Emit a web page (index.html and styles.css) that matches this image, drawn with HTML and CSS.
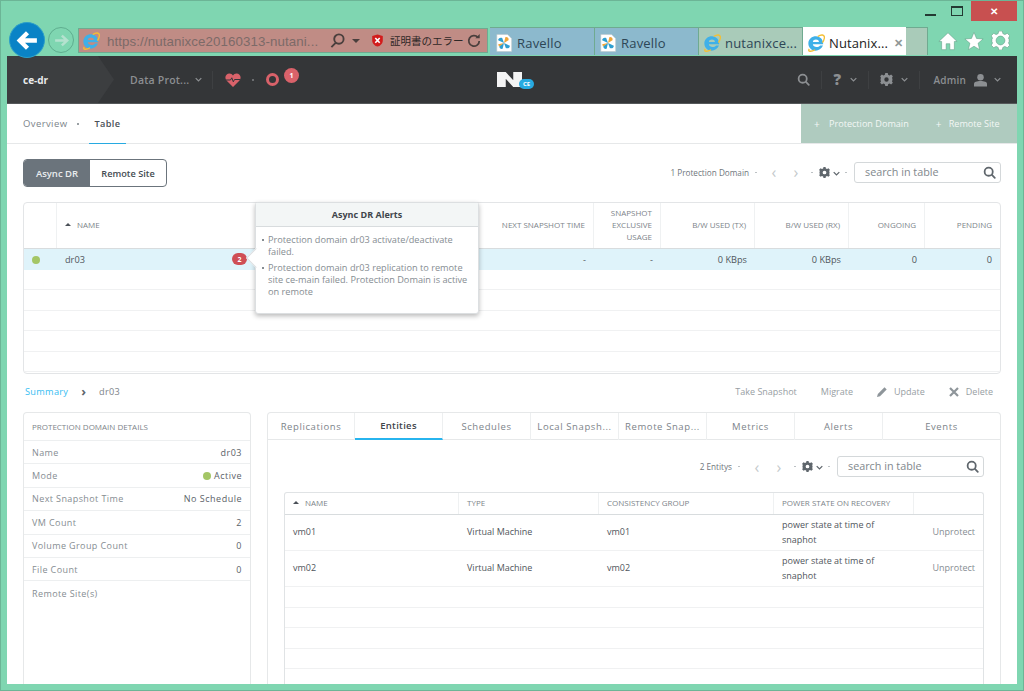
FILE: index.html
```html
<!DOCTYPE html>
<html lang="en">
<head>
<meta charset="utf-8">
<title>Nutanix</title>
<link rel="stylesheet" href="styles.css">
</head>
<body>
<svg class="defs" width="0" height="0" aria-hidden="true">
  <defs>
    <symbol id="ie" viewBox="0 0 20 20">
      <path d="M1.500 10.500C1.500 5.500 5.500 2.500 10 2.500C15 2.500 18 6.500 18 11.500H6.500C6.800 15 12.500 15.500 14.500 12.800H17.800C16 16.500 13 18.500 9.500 18.500C5 18.500 1.500 15 1.500 10.500ZM6.500 8.800H13.300C13 5.300 7 5.300 6.500 8.800Z" fill="#3fb0e8"/>
      <path d="M2.500 16.500C.3 20 5 19.800 9 17.500M12 2.800C15.500 .3 19.800 .2 19.300 4.500C19 6 18.300 8 17.200 9.500" fill="none" stroke="#f4bf33" stroke-width="1.500"/>
    </symbol>
    <symbol id="ravello" viewBox="0 0 20 20">
      <path d="M2 .5H14L18.500 5V19.500H2Z" fill="#fff" stroke="#b9c4c8" stroke-width=".6"/>
      <path d="M10 10L3.500 7C3.500 4.500 6 3.500 8 4.500ZM10 10L16.500 13C16.500 15.500 14 16.500 12 15.500ZM10 10L8.500 16.500C6 17 4.300 15 5 13Z" fill="#2f9fd0"/>
      <path d="M10 10L11.500 3.500C14 3 15.700 5 15 7Z" fill="#f0a63a"/>
      <path d="M10 10L4.500 14L3.500 11.500Z" fill="#f0a63a"/>
    </symbol>
    <symbol id="gear" viewBox="0 0 16 16">
      <path fill-rule="evenodd" d="M6.500 0H9.500L10 2.200L11.700 3L13.700 1.900L15.800 4L14.700 6L15.300 7V9L14.700 10L15.800 12L13.700 14.100L11.700 13L10 13.800L9.500 16H6.500L6 13.800L4.300 13L2.300 14.100L.2 12L1.300 10L.7 9V7L1.300 6L.2 4L2.300 1.900L4.300 3L6 2.200ZM8 5.300A2.700 2.700 0 1 0 8 10.700A2.700 2.700 0 1 0 8 5.300Z"/>
    </symbol>
    <symbol id="gear-open" viewBox="0 0 16 16">
      <path fill-rule="evenodd" d="M6.500 0H9.500L10 2.200L11.700 3L13.700 1.900L15.800 4L14.700 6L15.300 7V9L14.700 10L15.800 12L13.700 14.100L11.700 13L10 13.800L9.500 16H6.500L6 13.800L4.300 13L2.300 14.100L.2 12L1.300 10L.7 9V7L1.300 6L.2 4L2.300 1.900L4.300 3L6 2.200ZM8 4.300A3.700 3.700 0 1 0 8 11.700A3.700 3.700 0 1 0 8 4.300Z"/>
    </symbol>
    <symbol id="search" viewBox="0 0 16 16">
      <path d="M7 2A5 5 0 1 0 7 12A5 5 0 1 0 7 2ZM11 11L14.500 14.500" fill="none" stroke="currentColor" stroke-width="2.200" stroke-linecap="round"/>
    </symbol>
    <symbol id="chev" viewBox="0 0 10 6">
      <path d="M1 1L5 5L9 1" fill="none" stroke="currentColor" stroke-width="1.800"/>
    </symbol>
  </defs>
</svg>

<div class="window">
  <div class="titlebar">
    <span class="win-min"></span>
    <span class="win-max"></span>
    <span class="win-close">✕</span>
  </div>

  <div class="toolbar">
    <button class="nav-back" aria-label="Back">
      <svg viewBox="0 0 24 24" width="25" height="25"><path d="M21 12H5M12 4.500L4.500 12L12 19.500" fill="none" stroke="#fff" stroke-width="4.200"/></svg>
    </button>
    <button class="nav-forward" aria-label="Forward">
      <svg viewBox="0 0 24 24" width="17" height="17"><path d="M3 12H20M12.500 5L20 12L12.500 19" fill="none" stroke="#b4e2cf" stroke-width="3.500"/></svg>
    </button>
    <div class="address">
      <svg class="tab-icon"><use href="#ie"/></svg>
      <span class="url">https://nutanixce20160313-nutani...</span>
      <svg class="addr-search" viewBox="0 0 16 16"><path d="M9.500 1.500A5 5 0 1 0 9.500 11.500A5 5 0 1 0 9.500 1.500ZM6 10.500L1.500 15" fill="none" stroke="#4a3f3d" stroke-width="2"/></svg>
      <span class="addr-caret"></span>
      <svg class="shield" viewBox="0 0 16 16"><path d="M8 .5L14.500 2.500V8C14.500 12 11 15 8 15.500C5 15 1.500 12 1.500 8V2.500Z" fill="#d21c1c"/><path d="M5.300 5L10.700 10.700M10.700 5L5.300 10.700" stroke="#fff" stroke-width="2"/></svg>
      <span class="cert">証明書のエラー</span>
      <svg class="reload" viewBox="0 0 16 16"><path d="M12.500 4.500A6 6 0 1 0 14 8.500" fill="none" stroke="#4a3f3d" stroke-width="2"/><path d="M9.500 5.500H14.500V.5Z" fill="#4a3f3d"/></svg>
    </div>
    <div class="tabs">
      <div class="tab tab-blue tab-first"><svg class="tab-icon"><use href="#ravello"/></svg><span>Ravello</span></div>
      <div class="tab tab-blue"><svg class="tab-icon"><use href="#ravello"/></svg><span>Ravello</span></div>
      <div class="tab tab-grey"><svg class="tab-icon"><use href="#ie"/></svg><span>nutanixce...</span></div>
      <div class="tab tab-active"><svg class="tab-icon"><use href="#ie"/></svg><span>Nutanix...</span><i class="tab-x">✕</i></div>
      <div class="tab tab-new"></div>
    </div>
    <div class="tools">
      <svg viewBox="0 0 22 22" width="20" height="20"><path d="M11 2L21 11.500H18V20.500H13V14H9V20.500H4V11.500H1Z" fill="#fff" stroke="#5e9c83" stroke-width=".6"/></svg>
      <svg viewBox="0 0 22 22" width="20" height="20"><path d="M11 1.500L13.800 8.200L21 8.800L15.500 13.500L17.200 20.500L11 16.800L4.800 20.500L6.500 13.500L1 8.800L8.200 8.200Z" fill="#fff" stroke="#5e9c83" stroke-width=".6"/></svg>
      <svg class="tool-gear" width="19" height="19"><use href="#gear-open"/></svg>
    </div>
  </div>

  <div class="app">
    <header class="topbar">
      <div class="cluster">ce-dr</div>
      <div class="topnav">
        <span>Data Prot...</span><svg class="chev"><use href="#chev"/></svg>
      </div>
      <div class="health">
        <svg viewBox="0 0 16 14" width="16" height="14"><path d="M8 14L1.500 7.500C-1 4.500 1 .5 4.500 .5C6 .5 7.300 1.300 8 2.500C8.700 1.300 10 .5 11.500 .5C15 .5 17 4.500 14.500 7.500Z" fill="#d9626a"/><path d="M1 7H5.500L6.800 4.800L8.300 8.800L9.500 6.500H15" fill="none" stroke="#34363a" stroke-width="1"/></svg>
        <i class="dot-sep"></i>
        <span class="ring"></span>
        <span class="alert-count">1</span>
      </div>
      <div class="brand">
        <span class="brand-n"></span>
        <span class="brand-ce">CE</span>
      </div>
      <div class="top-right">
        <svg class="top-ico" width="13" height="13"><use href="#search"/></svg>
        <i class="top-sep"></i>
        <b class="top-help">?</b><svg class="chev"><use href="#chev"/></svg>
        <i class="top-sep"></i>
        <svg class="top-ico top-gear" width="13" height="13"><use href="#gear"/></svg><svg class="chev"><use href="#chev"/></svg>
        <i class="top-sep"></i>
        <span class="admin">Admin</span>
        <svg viewBox="0 0 14 14" width="13" height="14" class="top-user"><circle cx="7" cy="4" r="3.500"/><path d="M0 14V11C0 9 3 8 7 8S14 9 14 11V14Z"/></svg><svg class="chev"><use href="#chev"/></svg>
      </div>
    </header>

    <nav class="subnav">
      <div class="subtabs">
        <a class="subtab">Overview</a>
        <i class="subdot"></i>
        <a class="subtab subtab-active">Table</a>
      </div>
      <div class="actions">
        <span class="action"><i class="plus">+</i>Protection Domain</span>
        <span class="action"><i class="plus">+</i>Remote Site</span>
      </div>
    </nav>

    <main class="content">
      <div class="controls">
        <div class="segmented">
          <span class="seg seg-on">Async DR</span>
          <span class="seg">Remote Site</span>
        </div>
        <div class="table-tools">
          <span class="count">1 Protection Domain</span>
          <i class="tiny-dot"></i>
          <span class="pager">‹</span><span class="pager">›</span>
          <i class="tiny-dot"></i>
          <svg class="cog" width="11" height="11"><use href="#gear"/></svg><svg class="cog-chev"><use href="#chev"/></svg>
          <i class="tiny-dot"></i>
          <div class="searchbox"><span>search in table</span><svg width="13" height="13"><use href="#search"/></svg></div>
        </div>
      </div>

      <div class="pd-table">
        <div class="pd-row pd-head">
          <div class="cell"></div>
          <div class="cell"><i class="sort"></i>NAME</div>
          <div class="cell num">NEXT SNAPSHOT TIME</div>
          <div class="cell num">SNAPSHOT EXCLUSIVE USAGE</div>
          <div class="cell num">B/W USED (TX)</div>
          <div class="cell num">B/W USED (RX)</div>
          <div class="cell num">ONGOING</div>
          <div class="cell num">PENDING</div>
        </div>
        <div class="pd-row pd-sel">
          <div class="cell"><i class="led"></i></div>
          <div class="cell name-cell">dr03<span class="badge">2</span></div>
          <div class="cell num">-</div>
          <div class="cell num">-</div>
          <div class="cell num">0 KBps</div>
          <div class="cell num">0 KBps</div>
          <div class="cell num">0</div>
          <div class="cell num">0</div>
        </div>
        <div class="pd-empty"></div>
        <div class="pd-empty"></div>
        <div class="pd-empty"></div>
        <div class="pd-empty"></div>
        <div class="pd-empty"></div>

        <div class="popover">
          <h3>Async DR Alerts</h3>
          <ul>
            <li>Protection domain dr03 activate/deactivate failed.</li>
            <li>Protection domain dr03 replication to remote site ce-main failed. Protection Domain is active on remote</li>
          </ul>
        </div>
      </div>

      <div class="crumbbar">
        <div class="crumbs"><a>Summary</a><b>›</b><span>dr03</span></div>
        <div class="crumb-actions">
          <span>Take Snapshot</span>
          <span>Migrate</span>
          <span class="with-ico"><svg viewBox="0 0 10 10" width="10" height="10"><path d="M0 10L.8 7L7.500 .3L9.700 2.500L3 9.200Z" fill="#8e959a"/></svg>Update</span>
          <span class="with-ico"><svg viewBox="0 0 10 10" width="10" height="10"><path d="M1 1L9 9M9 1L1 9" stroke="#8e959a" stroke-width="2.200"/></svg>Delete</span>
        </div>
      </div>

      <div class="detail">
        <aside class="panel">
          <div class="panel-title">PROTECTION DOMAIN DETAILS</div>
          <div class="kv"><span>Name</span><b>dr03</b></div>
          <div class="kv"><span>Mode</span><b><i class="led led-small"></i>Active</b></div>
          <div class="kv"><span>Next Snapshot Time</span><b>No Schedule</b></div>
          <div class="kv"><span>VM Count</span><b>2</b></div>
          <div class="kv"><span>Volume Group Count</span><b>0</b></div>
          <div class="kv"><span>File Count</span><b>0</b></div>
          <div class="kv kv-last"><span>Remote Site(s)</span></div>
        </aside>

        <section class="tabbed">
          <div class="dtabs">
            <span class="dtab">Replications</span>
            <span class="dtab dtab-on">Entities</span>
            <span class="dtab">Schedules</span>
            <span class="dtab">Local Snapsh...</span>
            <span class="dtab">Remote Snap...</span>
            <span class="dtab">Metrics</span>
            <span class="dtab">Alerts</span>
            <span class="dtab dtab-last">Events</span>
          </div>
          <div class="dbody">
            <div class="table-tools inner-tools">
              <span class="count">2 Entitys</span>
              <i class="tiny-dot"></i>
              <span class="pager">‹</span><span class="pager">›</span>
              <i class="tiny-dot"></i>
              <svg class="cog" width="11" height="11"><use href="#gear"/></svg><svg class="cog-chev"><use href="#chev"/></svg>
              <i class="tiny-dot"></i>
              <div class="searchbox"><span>search in table</span><svg width="13" height="13"><use href="#search"/></svg></div>
            </div>
            <div class="en-table">
              <div class="en-row en-head">
                <div class="ecell"><i class="sort"></i>NAME</div>
                <div class="ecell">TYPE</div>
                <div class="ecell">CONSISTENCY GROUP</div>
                <div class="ecell">POWER STATE ON RECOVERY</div>
                <div class="ecell"></div>
              </div>
              <div class="en-row en-data">
                <div class="ecell">vm01</div>
                <div class="ecell">Virtual Machine</div>
                <div class="ecell">vm01</div>
                <div class="ecell">power state at time of snaphot</div>
                <div class="ecell link">Unprotect</div>
              </div>
              <div class="en-row en-data">
                <div class="ecell">vm02</div>
                <div class="ecell">Virtual Machine</div>
                <div class="ecell">vm02</div>
                <div class="ecell">power state at time of snaphot</div>
                <div class="ecell link">Unprotect</div>
              </div>
              <div class="en-empty"></div>
              <div class="en-empty"></div>
              <div class="en-empty"></div>
              <div class="en-empty"></div>
              <div class="en-empty"></div>
            </div>
          </div>
        </section>
      </div>
    </main>
  </div>
</div>
</body>
</html>
```
FILE: styles.css
```css
* { box-sizing: border-box; }
html, body { margin: 0; padding: 0; height: 100%; overflow: hidden; }
body { font-family: "Open Sans", "Liberation Sans", sans-serif; color: #4a5057; background: #7fd6b1; }
.defs { position: absolute; }
i { font-style: normal; }
svg { display: block; flex: none; }

.window { width: 1024px; height: 691px; display: flex; flex-direction: column; padding: 0 6px 6px; background: #7fd6b1; border: 1px solid #6cb596; overflow: hidden; }

.titlebar { height: 27px; flex: none; margin-top: -1px; display: flex; justify-content: flex-end; align-items: flex-start; }
.win-min { width: 11px; height: 2px; background: #243a33; margin: 14px 15px 0 0; }
.win-max { width: 12px; height: 10px; margin: 6px 8px 0 0; border: 1px solid #243a33; border-top-width: 2px; }
.win-close { width: 46px; height: 21px; background: #c85050; color: #fff; font-size: 10px; font-weight: 700; display: flex; align-items: center; justify-content: center; }

.toolbar { height: 29px; flex: none; display: flex; align-items: flex-start; position: relative; }
.nav-back { width: 36px; height: 36px; border-radius: 50%; background: #0a83c6; border: 1px solid #2c9fc9; padding: 0; margin: -5px 0 0 2px; display: flex; align-items: center; justify-content: center; flex: none; position: relative; z-index: 1; }
.nav-forward { width: 26px; height: 26px; border-radius: 50%; background: transparent; border: 1px solid #5fae8f; padding: 0; margin: 0 0 0 3px; display: flex; align-items: center; justify-content: center; flex: none; }
.address { width: 410px; height: 25px; margin: 1px 0 0 4px; flex: none; background: #c08c85; border: 1px solid #6faa90; display: flex; align-items: center; padding-left: 3px; }
.tab-icon { width: 18px; height: 18px; }
.url { font-size: 13.300px; color: #7c6a68; margin-left: 7px; width: 219px; white-space: nowrap; letter-spacing: .1px; font-family: "Liberation Sans", sans-serif; position: relative; top: 1px; }
.addr-search { width: 15px; height: 15px; margin-left: 4px; }
.addr-caret { width: 0; height: 0; border: 4px solid transparent; border-top: 4px solid #4a3f3d; border-bottom: 0; margin-left: 7px; }
.shield { width: 13px; height: 15px; margin-left: 11px; }
.cert { font-family: "Noto Sans CJK JP", sans-serif; font-size: 10.500px; color: #2f2827; margin-left: 6px; white-space: nowrap; width: 74px; }
.reload { width: 14px; height: 15px; margin-left: 3px; }

.tabs { display: flex; margin-left: 2px; height: 28px; flex: none; }
.tab { width: 104px; height: 28px; display: flex; align-items: center; padding: 2px 0 0 4px; gap: 4px; font-size: 13px; letter-spacing: .2px; border-right: 1px solid #6faa90; white-space: nowrap; flex: none; border-top: 1px solid #6faa90; }
.tab-first { width: 105px; padding-left: 5px; }
.tab-blue { background: #8cb9cd; color: #2d4656; }
.tab-grey { background: #a9cbb9; color: #2d4656; }
.tab-active { background: #fff; color: #222; width: 103px; position: relative; border-top-color: #fff; border-right: 0; letter-spacing: .1px; }
.tab-x { color: #8f9796; font-size: 11px; font-weight: 700; margin-left: 2px; }
.tab-new { width: 22px; background: #a9cbb9; padding: 0; }
.tools { display: flex; margin-left: 10px; gap: 6px; align-items: center; height: 27px; }
.tool-gear { fill: #fff; stroke: #5e9c83; stroke-width: .5; margin-left: 1px; }

.app { flex: 1; min-height: 0; background: #fff; display: flex; flex-direction: column; overflow: hidden; position: relative; }

.topbar { height: 48px; flex: none; background: #343638; display: flex; align-items: center; position: relative; border-bottom: 1px solid #55585a; }
.cluster { width: 108px; height: 47px; padding-left: 16px; display: flex; align-items: center; font-size: 10px; font-weight: 700; color: #e9eaeb; background: #3c3e40; clip-path: polygon(0 0, 91px 0, 107px 50%, 91px 100%, 0 100%); flex: none; }
.topnav { display: flex; align-items: center; gap: 6px; color: #8c8f92; font-size: 10.500px; font-weight: 600; letter-spacing: .2px; margin-left: 15px; width: 83px; height: 18px; border-right: 1px solid #3e4042; }
.chev { width: 7px; height: 5px; color: #8c8f92; }
.health { display: flex; align-items: center; margin-left: 12px; position: relative; height: 20px; }
.dot-sep { width: 2px; height: 2px; background: #6b6d70; margin: 0 12px 0 11px; }
.ring { width: 13px; height: 13px; border: 3px solid #d9626a; border-radius: 50%; }
.alert-count { width: 15px; height: 15px; border-radius: 50%; background: #d9626a; color: #fff; font-size: 7px; font-weight: 700; display: flex; align-items: center; justify-content: center; margin: -9px 0 0 5px; }
.brand { position: absolute; left: 490px; top: 16px; width: 38px; height: 18px; }
.brand-n { display: block; width: 25px; height: 15px; background: #f4f4f4; clip-path: polygon(0 0, 35% 0, 65% 55%, 65% 0, 100% 0, 100% 100%, 65% 100%, 35% 45%, 35% 100%, 0 100%); }
.brand-ce { position: absolute; left: 22px; top: 7px; width: 15px; height: 10px; border-radius: 5px; background: #27aae1; color: #fff; font-size: 6px; font-weight: 700; display: flex; align-items: center; justify-content: center; }
.top-right { margin-left: auto; display: flex; align-items: center; color: #8c8f92; padding-right: 16px; }
.top-ico { fill: #8c8f92; color: #8c8f92; }
.top-sep { width: 1px; height: 18px; background: #3e4042; margin: 0 11px; }
.top-help { font-size: 15px; font-weight: 800; margin-right: 9px; width: 8px; line-height: 1; }
.top-gear { margin-right: 8px; }
.admin { font-size: 10px; font-weight: 600; margin-left: 2px; letter-spacing: .2px; }
.top-user { fill: #8c8f92; margin: 0 7px 0 8px; }

.subnav { height: 40px; flex: none; display: flex; justify-content: space-between; border-bottom: 1px solid #e6e8e9; }
.subtabs { display: flex; align-items: stretch; padding-left: 16px; }
.subtab { font-size: 9.500px; letter-spacing: .4px; color: #7d858b; display: flex; align-items: center; }
.subtab-active { color: #4a5057; font-size: 9.200px; font-weight: 600; padding: 0 5px; border-bottom: 1px solid #27aae1; margin-bottom: -1px; }
.subdot { width: 2px; height: 2px; background: #9aa0a4; align-self: center; margin: 0 10px; }
.actions { width: 216px; background: #afcbbf; color: #f3f7f5; font-size: 9.100px; display: flex; align-items: center; padding-left: 13px; gap: 27px; white-space: nowrap; }
.action { display: flex; align-items: center; }
.plus { width: 15px; font-size: 10px; }
.action + .action .plus { width: 13px; }

.content { padding: 15px 16px 0; display: flex; flex-direction: column; flex: 1; min-height: 0; }
.controls { height: 28px; flex: none; display: flex; justify-content: space-between; }
.segmented { display: flex; border: 1px solid #6b747c; border-radius: 4px; overflow: hidden; height: 28px; }
.seg { width: 76px; display: flex; align-items: center; justify-content: center; font-size: 9.200px; font-weight: 600; color: #444b52; }
.seg-on { width: 66px; background: #6b747c; color: #e9ecee; font-size: 9.500px; }
.table-tools { display: flex; align-items: center; height: 26px; font-size: 8.200px; color: #6f767c; }
.count { white-space: nowrap; }
.tiny-dot { width: 2px; height: 1px; background: #bcc1c4; margin: 0 6px; }
.pager + .tiny-dot { margin-left: 4px; }
.cog-chev + .tiny-dot { margin: 0 7px 0 5px; }
.pager { color: #c4c9cc; font-size: 16px; width: 22px; text-align: center; line-height: 1; }
.cog { fill: #5f666c; }
.cog-chev { width: 7px; height: 5px; color: #5f666c; margin: 2px 0 0 3px; }
.searchbox { width: 147px; height: 21px; border: 1px solid #d4d8da; border-radius: 3px; display: flex; align-items: center; justify-content: space-between; padding: 0 4px 2px 10px; font-size: 10.800px; color: #81888d; }
.searchbox svg { color: #5f666c; margin-top: 2px; }

.pd-table { position: relative; margin-top: 15px; height: 172px; flex: none; border: 1px solid #e3e5e7; border-radius: 4px; }
.pd-row { display: grid; grid-template-columns: 33px 414px 123px 67px 94px 94px 76px 1fr; }
.pd-head { height: 46px; border-bottom: 1px solid #d8dcde; font-size: 8px; line-height: 12px; color: #7d848a; }
.pd-head .cell { padding-bottom: 2px; }
.cell { border-right: 1px solid #eff1f2; padding: 0 8px; display: flex; align-items: center; }
.cell:last-child { border-right: 0; }
.num { justify-content: flex-end; text-align: right; }
.pd-sel { height: 21px; background: #dff3fa; font-size: 9.200px; color: #50565c; }
.pd-sel .cell { border: 0; }
.name-cell { position: relative; }
.sort { width: 0; height: 0; border: 3px solid transparent; border-bottom: 3px solid #4a5057; border-top: 0; margin-right: 6px; }
.led { width: 8px; height: 8px; border-radius: 50%; background: #a4c666; display: block; }
.badge { position: absolute; left: 175px; top: 4px; width: 15px; height: 12px; border-radius: 6px; background: #cf4f55; color: #fff; font-size: 7px; font-weight: 700; display: flex; align-items: center; justify-content: center; }
.pd-empty { height: 20.400px; border-bottom: 1px solid #f0f1f2; }
.pd-empty:last-of-type { border-bottom: 0; }

.popover { position: absolute; left: 231px; top: -1px; width: 224px; height: 112px; background: #fff; border: 1px solid #dcdfe1; border-radius: 3px; box-shadow: 0 2px 5px rgba(0,0,0,.28); z-index: 2; }
.popover::before { content: ""; position: absolute; left: -7px; top: 48px; width: 13px; height: 13px; background: #fff; transform: rotate(45deg); border-left: 1px solid #dcdfe1; border-bottom: 1px solid #dcdfe1; }
.popover h3 { margin: 0; height: 24px; background: #f3f6f6; border-bottom: 1px solid #d8dcde; font-size: 9px; font-weight: 700; color: #3f454b; display: flex; align-items: center; justify-content: center; }
.popover ul { margin: 0; padding: 7px 8px 0 12px; list-style: none; position: relative; }
.popover li { font-size: 9.200px; line-height: 12px; color: #868d92; margin-bottom: 4px; position: relative; }
.popover li::before { content: ""; position: absolute; left: -6px; top: 5px; width: 2px; height: 2px; background: #868d92; }

.crumbbar { height: 38px; flex: none; display: flex; justify-content: space-between; align-items: center; font-size: 9px; padding-bottom: 3px; }
.crumbs { display: flex; align-items: center; padding-left: 2px; font-size: 9.200px; }
.crumbs a { color: #35bdf2; letter-spacing: .3px; }
.crumbs b { margin: 0 13px; color: #5f666c; font-size: 13px; line-height: 1; }
.crumbs span { color: #7d848a; letter-spacing: .3px; }
.crumb-actions { display: flex; gap: 24px; color: #979ea3; padding-right: 8px; }
.with-ico { display: flex; align-items: center; gap: 7px; }

.detail { flex: 1; min-height: 0; display: grid; grid-template-columns: 228px 734px; gap: 16px; }
.panel { border: 1px solid #e6e8e9; border-bottom: 0; border-radius: 4px 4px 0 0; }
.panel-title { height: 28px; padding-left: 8px; display: flex; align-items: center; font-size: 8px; color: #7d848a; border-bottom: 1px solid #edeff0; }
.kv { height: 23.400px; display: flex; justify-content: space-between; align-items: center; padding: 0 8px; font-size: 9px; letter-spacing: .4px; color: #868d92; border-bottom: 1px solid #edeff0; }
.kv b { font-weight: 400; color: #5b6268; display: flex; align-items: center; letter-spacing: .5px; }
.led-small { margin-right: 3px; }
.kv-last { border: 0; }

.tabbed { border: 1px solid #e6e8e9; border-bottom: 0; border-radius: 4px 4px 0 0; display: flex; flex-direction: column; min-height: 0; }
.dtabs { height: 27px; flex: none; display: grid; grid-template-columns: 87px 88px 88px 88px 88px 88px 88px 1fr; border-bottom: 1px solid #e6e8e9; }
.dtab { display: flex; align-items: center; justify-content: center; font-size: 9.500px; letter-spacing: .6px; color: #7d848a; border-right: 1px solid #edeff0; white-space: nowrap; }
.dtab-last { border-right: 0; }
.dtab-on { color: #3f454b; border-bottom: 2px solid #27b4ee; height: 27px; font-weight: 600; letter-spacing: .3px; }
.dbody { padding: 16px 16px 0; flex: 1; min-height: 0; }
.inner-tools { justify-content: flex-end; height: 21px; }
.en-table { margin-top: 15px; border: 1px solid #e0e3e5; border-bottom: 0; border-radius: 3px 3px 0 0; }
.en-row { display: grid; grid-template-columns: 174px 140px 175px 140px 1fr; }
.en-head { height: 22px; border-bottom: 1px solid #d8dcde; font-size: 8px; color: #7d848a; }
.en-head .ecell { border-right: 1px solid #eff1f2; padding-bottom: 3px; }
.en-head .ecell:last-child { border-right: 0; }
.ecell { display: flex; align-items: center; padding: 0 8px; }
.en-data { height: 36px; border-bottom: 1px solid #f0f1f2; font-size: 9px; line-height: 14.500px; color: #50565c; }
.link { color: #868d92; justify-content: flex-end; }
.en-empty { height: 20.600px; border-bottom: 1px solid #f0f1f2; }
```
